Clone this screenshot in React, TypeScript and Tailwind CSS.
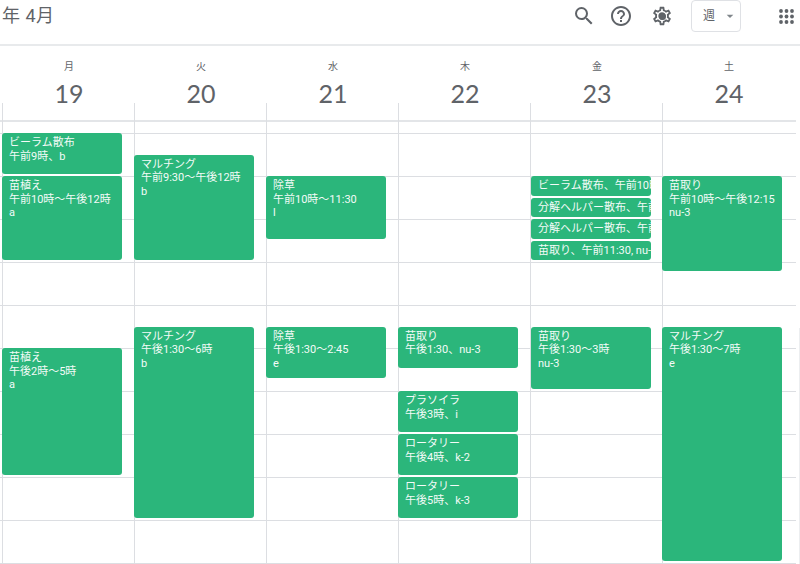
import React from 'react';
import { MdSearch, MdHelpOutline, MdOutlineSettings, MdArrowDropDown } from 'react-icons/md';

const HOUR = 43;
const GRID_TOP = 30; // 9:00 line, measured from the top of the grid body

type CalEvent = { start: number; hours: number; lines: string[] };

const days: { label: string; date: string; shift: number; events: CalEvent[] }[] = [
  {
    label: '月',
    date: '19',
    shift: 0,
    events: [
      { start: 9, hours: 1, lines: ['ビーラム散布', '午前9時、b'] },
      { start: 10, hours: 2, lines: ['苗植え', '午前10時〜午後12時', 'a'] },
      { start: 14, hours: 3, lines: ['苗植え', '午後2時〜5時', 'a'] },
    ],
  },
  {
    label: '火',
    date: '20',
    shift: 0,
    events: [
      { start: 9.5, hours: 2.5, lines: ['マルチング', '午前9:30〜午後12時', 'b'] },
      { start: 13.5, hours: 4.5, lines: ['マルチング', '午後1:30〜6時', 'b'] },
    ],
  },
  {
    label: '水',
    date: '21',
    shift: 0,
    events: [
      { start: 10, hours: 1.5, lines: ['除草', '午前10時〜11:30', 'l'] },
      { start: 13.5, hours: 1.25, lines: ['除草', '午後1:30〜2:45', 'e'] },
    ],
  },
  {
    label: '木',
    date: '22',
    shift: 0,
    events: [
      { start: 13.5, hours: 1, lines: ['苗取り', '午後1:30、nu-3'] },
      { start: 15, hours: 1, lines: ['プラソイラ', '午後3時、i'] },
      { start: 16, hours: 1, lines: ['ロータリー', '午後4時、k-2'] },
      { start: 17, hours: 1, lines: ['ロータリー', '午後5時、k-3'] },
    ],
  },
  {
    label: '金',
    date: '23',
    shift: 1,
    events: [
      { start: 10, hours: 0.5, lines: ['ビーラム散布、午前10時、b'] },
      { start: 10.5, hours: 0.5, lines: ['分解ヘルパー散布、午前10:30'] },
      { start: 11, hours: 0.5, lines: ['分解ヘルパー散布、午前11時'] },
      { start: 11.5, hours: 0.5, lines: ['苗取り、午前11:30, nu-3'] },
      { start: 13.5, hours: 1.5, lines: ['苗取り', '午後1:30〜3時', 'nu-3'] },
    ],
  },
  {
    label: '土',
    date: '24',
    shift: 0,
    events: [
      { start: 10, hours: 2.25, lines: ['苗取り', '午前10時〜午後12:15', 'nu-3'] },
      { start: 13.5, hours: 5.5, lines: ['マルチング', '午後1:30〜7時', 'e'] },
    ],
  },
];

const SettingsIcon = () => (
  <span className="relative flex h-[22px] w-[22px] items-center justify-center">
    <MdOutlineSettings className="h-[22px] w-[22px]" />
    <span className="absolute h-[7px] w-[7px] rounded-full bg-[#5f6368]" />
  </span>
);

const AppsIcon = () => (
  <svg viewBox="0 0 15 15" className="ml-[38px] mr-[6px] h-[15px] w-[15px]" fill="currentColor">
    {[2, 7.5, 13].map((cy) =>
      [2, 7.5, 13].map((cx) => <circle key={`${cx}-${cy}`} cx={cx} cy={cy} r="1.9" />),
    )}
  </svg>
);

const EventCard = ({ ev, shift }: { ev: CalEvent; shift: number }) => (
  <div
    className="absolute w-[120px] overflow-hidden rounded-[3px] bg-[#2bb67b] pl-[7px] pt-[3px] text-[11px] leading-[13.7px] text-[#f4fbf8]"
    style={{ left: shift - 1, top: GRID_TOP + (ev.start - 9) * HOUR, height: ev.hours * HOUR - 2 }}
  >
    {ev.lines.map((line) => (
      <div key={line} className="whitespace-nowrap">
        {line}
      </div>
    ))}
  </div>
);

export default function App() {
  return (
    <div className="h-[564px] w-[800px] overflow-hidden bg-white font-['Roboto','Noto_Sans_CJK_JP',sans-serif] text-[#5f6368]">
      <header className="flex h-[46px] items-start border-b-2 border-[#e8eaec]">
        <h1 className="pl-[2px] pt-[3px] text-[18px] leading-[26px] tracking-[0.5px]">年 4月</h1>
        <div className="ml-auto flex h-[32px] items-center">
          <MdSearch className="h-[24px] w-[24px]" />
          <MdHelpOutline className="ml-[13px] h-[24px] w-[24px]" />
          <span className="ml-[18px]">
            <SettingsIcon />
          </span>
          <button className="ml-[18px] flex h-[32px] w-[50px] items-center rounded-[4px] border border-[#dfe1e5] pl-[11px] text-[12px]">
            週
            <MdArrowDropDown className="ml-[7px] h-[16px] w-[16px] text-[#80868b]" />
          </button>
          <AppsIcon />
        </div>
      </header>

      <div className="flex h-[57px] pl-[3px]">
        {days.map((d) => (
          <div key={d.date} className="flex w-[132px] flex-col items-center pt-[14px]">
            <span className="text-[10px] leading-[14px]">{d.label}</span>
            <span className="mt-[3px] font-['Lato'] text-[25px] leading-[32px]">{d.date}</span>
          </div>
        ))}
      </div>

      <div className="relative h-[461px]">
        <div className="absolute inset-0 flex flex-col pr-[4px]">
          <div className="h-[19px] shrink-0 border-b-2 border-[#e3e5e8]" />
          <div className="h-[12px] shrink-0 border-b border-[#dcdee2]" />
          {Array.from({ length: 10 }, (_, i) => (
            <div key={i} className="h-[43px] shrink-0 border-b border-[#dcdee2]" />
          ))}
        </div>
        <div className="absolute right-0 top-[225px] bottom-0 w-px bg-[#eceef0]" />
        <div className="relative flex h-full pl-[2px]">
          {days.map((d) => (
            <div key={d.date} className="relative h-full w-[132px] border-l border-[#dcdee2]">
              {d.events.map((ev) => (
                <EventCard key={ev.start} ev={ev} shift={d.shift} />
              ))}
            </div>
          ))}
        </div>
      </div>
    </div>
  );
}
